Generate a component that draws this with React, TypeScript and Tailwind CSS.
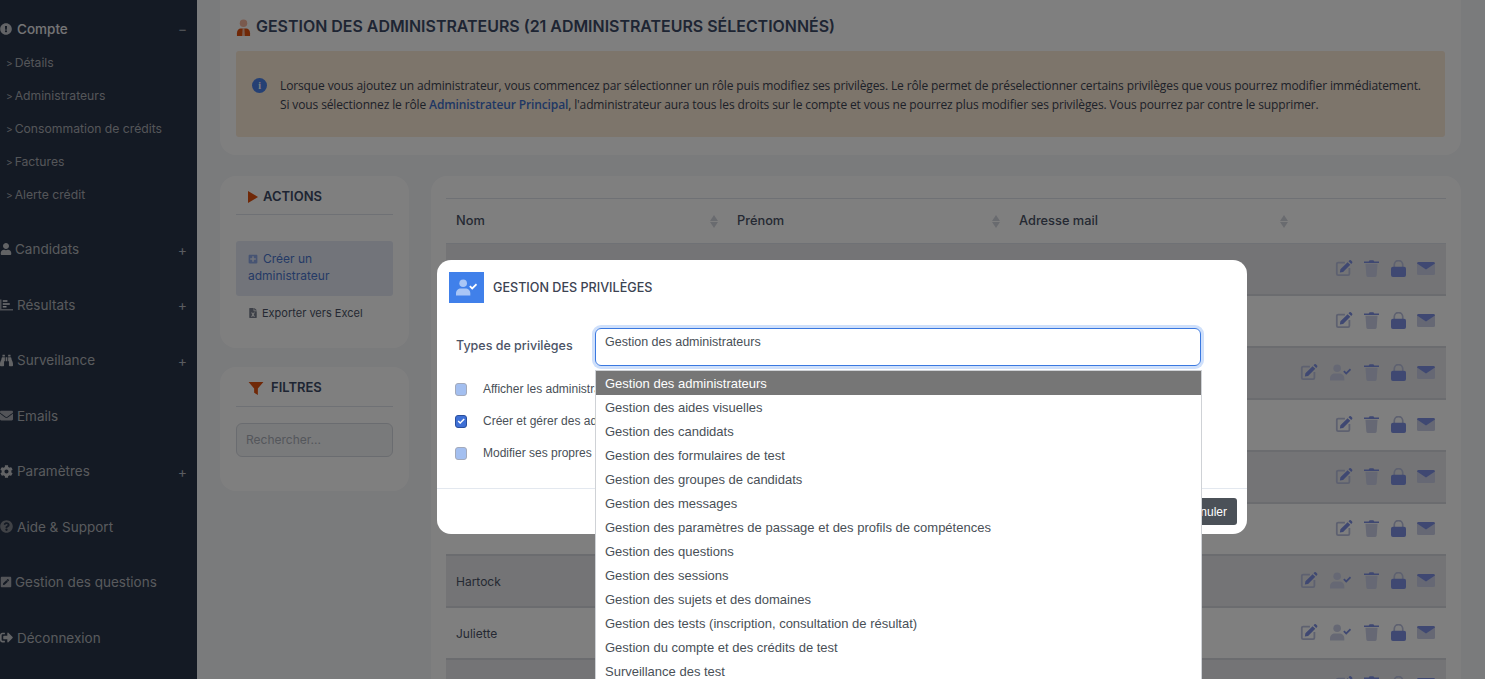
import React from "react";
import {
  FaBinoculars,
  FaCog,
  FaEnvelope,
  FaExclamationCircle,
  FaFileExcel,
  FaPenSquare,
  FaPlusSquare,
  FaQuestionCircle,
  FaSignOutAlt,
  FaUser,
} from "react-icons/fa";

const poppins = "font-['Inter','Liberation_Sans',sans-serif]";
const arial = "font-['Liberation_Sans',Arial,sans-serif]";

function ChartIcon() {
  return (
    <svg viewBox="0 0 14 12" className="w-[13px] h-[12px]">
      <path d="M0 0h1.6v10.4H14V12H0z" fill="#c9ccd2" opacity="0.7" />
      <path d="M3 1h5v1.6H3zM3 4h7.5v1.6H3zM3 7h4v1.6H3z" fill="#e6e8ec" />
    </svg>
  );
}

function EditIcon() {
  return (
    <svg viewBox="0 0 20 20" className="w-[18px] h-[18px]">
      <path d="M11 4H3.5A1.5 1.5 0 0 0 2 5.500V16.500A1.500 1.500 0 0 0 3.500 18H14.500A1.500 1.500 0 0 0 16 16.500V10" fill="none" stroke="#bcc2e0" strokeWidth="2" />
      <path d="M6 11.500 14 3.500l3 3-8 8-3.600.6zM15 2.500l1-1a1.200 1.200 0 0 1 1.700 0l1.300 1.300a1.200 1.200 0 0 1 0 1.700l-1 1z" fill="#7e90e4" />
    </svg>
  );
}

function TrashIcon() {
  return (
    <svg viewBox="0 0 16 18" className="w-[15px] h-[17px]">
      <path d="M1.500 4h13l-1 12.500a1.500 1.500 0 0 1-1.500 1.500H4a1.500 1.500 0 0 1-1.500-1.500z" fill="#ccd1e8" />
      <path d="M0 1.500h5L6 .2h4l1 1.300h5V3.200H0z" fill="#7e90e4" />
    </svg>
  );
}

function LockIcon() {
  return (
    <svg viewBox="0 0 16 18" className="w-[15px] h-[17px]">
      <path d="M3.500 8V5a4.500 4.500 0 0 1 9 0v3" fill="none" stroke="#bcc2e0" strokeWidth="1.800" />
      <rect x="0" y="7" width="16" height="11" rx="2" fill="#7e90e4" />
    </svg>
  );
}

function MailIcon() {
  return (
    <svg viewBox="0 0 18 13" className="w-[18px] h-[13px]">
      <rect x="0" y="0" width="18" height="13" rx="1.500" fill="#ccd1e8" />
      <path d="M0 1.500A1.500 1.500 0 0 1 1.500 0h15A1.500 1.500 0 0 1 18 1.500L9 7.500z" fill="#7e90e4" />
    </svg>
  );
}

function PersonCheckIcon({ person, check }: { person: string; check: string }) {
  return (
    <svg viewBox="0 0 22 17" className="w-[21px] h-[17px]">
      <circle cx="7.500" cy="4" r="4" fill={person} />
      <path d="M0 17v-2.500C0 11.500 2.500 9.500 5 9.500h5c2.500 0 5 2 5 5V17z" fill={person} />
      <path d="m14.500 7 2.500 2.500L21.500 5" fill="none" stroke={check} strokeWidth="1.800" />
    </svg>
  );
}

function RowIcons({ person }: { person?: boolean }) {
  return (
    <div className="flex items-center justify-end gap-[7.5px] pr-[10px] mb-[2px]">
      <span className="w-[20px] flex justify-center"><EditIcon /></span>
      {person && (
        <span className="w-[27px] flex justify-center">
          <PersonCheckIcon person="#ccd1e8" check="#7e90e4" />
        </span>
      )}
      <span className="w-[20px] flex justify-center"><TrashIcon /></span>
      <span className="w-[20px] flex justify-center"><LockIcon /></span>
      <span className="w-[20px] flex justify-center"><MailIcon /></span>
    </div>
  );
}

function SortArrows() {
  return (
    <span className="flex flex-col gap-[1px]">
      <span className="w-0 h-0 border-x-[4px] border-x-transparent border-b-[6px] border-b-[#d3d7df]" />
      <span className="w-0 h-0 border-x-[4px] border-x-transparent border-t-[6px] border-t-[#d3d7df]" />
    </span>
  );
}

const mainItems = [
  { label: "Candidats", icon: <FaUser className="text-[12px] text-[#c4c6cb]" />, plus: true, gap: "ml-[3px]" },
  { label: "Résultats", icon: <ChartIcon />, plus: true, gap: "ml-[4px]" },
  { label: "Surveillance", icon: <FaBinoculars className="text-[13px] text-[#c4c6cb]" />, plus: true, gap: "ml-[4px]" },
  { label: "Emails", icon: <FaEnvelope className="text-[13px] text-[#a6a9b0]" />, gap: "ml-[4px]" },
  { label: "Paramètres", icon: <FaCog className="text-[13px] text-[#c4c6cb]" />, plus: true, gap: "ml-[4px]" },
  { label: "Aide & Support", icon: <FaQuestionCircle className="text-[13px] text-[#80848d]" />, gap: "ml-[4px]" },
  { label: "Gestion des questions", icon: <FaPenSquare className="text-[12px] text-[#a6a9b0]" />, gap: "ml-[3px]" },
  { label: "Déconnexion", icon: <FaSignOutAlt className="text-[13px] text-[#c4c6cb]" />, gap: "ml-[4px]" },
];

const subItems = ["Détails", "Administrateurs", "Consommation de crédits", "Factures", "Alerte crédit"];

const options = [
  "Gestion des administrateurs",
  "Gestion des aides visuelles",
  "Gestion des candidats",
  "Gestion des formulaires de test",
  "Gestion des groupes de candidats",
  "Gestion des messages",
  "Gestion des paramètres de passage et des profils de compétences",
  "Gestion des questions",
  "Gestion des sessions",
  "Gestion des sujets et des domaines",
  "Gestion des tests (inscription, consultation de résultat)",
  "Gestion du compte et des crédits de test",
  "Surveillance des test",
];

const rows = [
  { nom: "" },
  { nom: "" },
  { nom: "", person: true },
  { nom: "" },
  { nom: "" },
  { nom: "" },
  { nom: "Hartock", person: true },
  { nom: "Juliette", person: true },
  { nom: "" },
];

const privileges = [
  { label: "Afficher les administrateurs" },
  { label: "Créer et gérer des administrateurs", checked: true },
  { label: "Modifier ses propres privilèges" },
];

function Sidebar() {
  return (
    <aside className={`w-[197px] shrink-0 bg-[#283448] text-[#dfe1e5] ${poppins}`}>
      <div className="h-[33px] mt-[12.5px] flex items-center pr-[10px] text-[13.500px] font-medium text-[#e8e9ec]">
        <FaExclamationCircle className="text-[12px] text-[#c4c7cd]" />
        <span className="ml-[5px] flex-1">Compte</span>
        <span className="text-[#9ba0a9]">−</span>
      </div>
      <ul className="pt-[1px] mb-[10px]">
        {subItems.map((s) => (
          <li key={s} className="h-[33px] flex items-center pl-[6px] text-[12.200px] text-[#a9acb3]">
            <span className="mr-[2px] text-[10px]">&gt;</span>{s}
          </li>
        ))}
      </ul>
      {mainItems.map((m) => (
        <div key={m.label} className="h-[55.500px] flex items-center pr-[10px] text-[13.500px] text-[#b2b5bb]">
          {m.icon}
          <span className={`${m.gap} flex-1`}>{m.label}</span>
          {m.plus && <span className="text-[14px] text-[#b4b8c0]">+</span>}
        </div>
      ))}
    </aside>
  );
}

function Content() {
  return (
    <main className="flex-1 min-w-0 bg-[#f5f6f9] pl-[23px] pr-[24px]">
      <section className="h-[155px] bg-white rounded-b-2xl px-[16px] pt-[16px]">
        <h1 className={`flex items-center gap-[5px] h-[22px] text-[15.950px] font-semibold text-[#3c4a66] ${poppins}`}>
          <svg viewBox="0 0 16 18" className="w-[15px] h-[17px]">
            <circle cx="8" cy="4.500" r="4" fill="#f5b49c" />
            <path d="M1 18v-3c0-3 2-5 4-5h6c2 0 4 2 4 5v3z" fill="#e0500f" />
            <path d="M7 10h2L9.500 18h-3z" fill="#fff" opacity="0.6" />
          </svg>
          GESTION DES ADMINISTRATEURS (21 ADMINISTRATEURS SÉLECTIONNÉS)
        </h1>
        <div className="mt-[13px] h-[86px] rounded-[3px] bg-[#faead6] flex items-center pl-[16px] pt-[2px] text-[12px] tracking-[-0.125px] leading-[19.500px] text-[#3b4252] font-['Open_Sans',sans-serif]">
          <span className="w-[15px] h-[15px] rounded-full bg-[#4a80e8] text-white text-[10px] font-bold flex items-center justify-center mr-[13px] -mt-[19px] font-['Liberation_Serif',serif]">i</span>
          <div>
            <p>Lorsque vous ajoutez un administrateur, vous commencez par sélectionner un rôle puis modifiez ses privilèges. Le rôle permet de préselectionner certains privilèges que vous pourrez modifier immédiatement.</p>
            <p>
              Si vous sélectionnez le rôle <span className="font-semibold text-[#3f6fc9]">Administrateur Principal</span>, l'administrateur aura tous les droits sur le compte et vous ne pourrez plus modifier ses privilèges. Vous pourrez par contre le supprimer.
            </p>
          </div>
        </div>
      </section>

      <div className="mt-[21px] flex gap-[22px] items-start">
        <div className="w-[189px] shrink-0">
          <section className={`h-[172px] bg-white rounded-2xl px-[16px] ${poppins}`}>
            <h2 className="h-[39px] pt-[3px] flex items-center pl-[12px] gap-[5px] border-b border-[#dfe3ea] text-[13px] font-semibold text-[#3c4a66]">
              <span className="w-0 h-0 border-y-[6px] border-y-transparent border-l-[10px] border-l-[#e0500f]" />
              ACTIONS
            </h2>
            <div className="mt-[26px] h-[55px] rounded-[3px] bg-[#e4e9f5] pl-[12px] pr-[30px] pt-[9px] text-[12px] leading-[17px] text-[#4a74cc]">
              <FaPlusSquare className="inline text-[10px] mr-[5px] mb-[2px] text-[#8ea8e6]" />
              Créer un administrateur
            </div>
            <div className="mt-[9px] pl-[12px] flex items-center gap-[4px] text-[11px] text-[#4b5366]">
              <FaFileExcel className="text-[10px] text-[#7b8190]" />
              Exporter vers Excel
            </div>
          </section>
          <section className={`mt-[19px] h-[124px] bg-white rounded-2xl px-[16px] ${poppins}`}>
            <h2 className="h-[40px] pt-[3px] flex items-center pl-[12px] gap-[7px] border-b border-[#dfe3ea] text-[13px] font-semibold text-[#3c4a66]">
              <svg viewBox="0 0 16 14" className="w-[16px] h-[13px]">
                <path d="M0 0h16l-6 7v7l-4-2.500V7z" fill="#e0500f" />
              </svg>
              FILTRES
            </h2>
            <div className="mt-[16px] h-[34px] rounded-[6px] border border-[#d5d9e0] bg-[#f3f4f6] flex items-center px-[9px] text-[12px] text-[#a9aeb8]">
              Rechercher...
            </div>
          </section>
        </div>

        <section className={`flex-1 min-w-0 h-[600px] bg-white rounded-t-2xl px-[15px] pt-[22px] ${poppins}`}>
          <div className="h-[46px] grid grid-cols-[281px_282px_288px_1fr] items-center border-y border-[#dfe3ea] text-[12.800px] font-medium text-[#4b5366]">
            {["Nom", "Prénom", "Adresse mail"].map((h) => (
              <div key={h} className="flex items-center justify-between pl-[10px] pr-[9px]">
                {h}
                <SortArrows />
              </div>
            ))}
          </div>
          {rows.map((r, i) => (
            <div
              key={i}
              className={`h-[52px] grid grid-cols-[282px_1fr] items-center border-b-2 border-[#d6d9de] text-[12px] text-[#4b5366] ${i % 2 === 0 ? "bg-[#e8e9ec]" : "bg-white"}`}
            >
              <div className="pl-[10px] pt-[1px]">{r.nom}</div>
              <RowIcons person={r.person} />
            </div>
          ))}
        </section>
      </div>
    </main>
  );
}

function Modal() {
  return (
    <div className="absolute left-[437px] top-[260px] w-[810px] h-[274px] rounded-[14px] bg-white">
      <div className={`h-[55px] pl-[12px] pt-[12px] flex items-start gap-[9px] ${poppins}`}>
        <div className="w-[35px] h-[31px] bg-[#4080ea] flex items-center justify-center">
          <PersonCheckIcon person="#a9c6f6" check="#ffffff" />
        </div>
        <h3 className="h-[32px] flex items-center text-[12.600px] font-medium text-[#3c4352]">GESTION DES PRIVILÈGES</h3>
      </div>
      <div className="mt-[13px] flex items-start h-[38px]">
        <label className={`w-[158px] pl-[19px] h-[36px] flex items-center text-[12.500px] font-medium text-[#4b5366] ${poppins}`}>Types de privilèges</label>
        <div className={`w-[606px] h-[38px] rounded-[6px] border border-[#3a78e0] ring-[3px] ring-[#cfe0fb] pl-[9px] pt-[4px] text-[12.500px] text-[#495057] ${arial}`}>
          Gestion des administrateurs
        </div>
      </div>
      <ul className={`mt-[7px] pl-[18px] text-[12px] text-[#495057] ${arial}`}>
        {privileges.map((p) => (
          <li key={p.label} className="h-[32px] flex items-center gap-[16px]">
            <span className={`w-[12px] h-[13px] rounded-[3px] flex items-center justify-center ${p.checked ? "bg-[#3e70d6] border border-[#2b4f9c]" : "bg-[#a3bff0] border border-[#a3aabb]"}`}>
              {p.checked && (
                <svg viewBox="0 0 10 10" className="w-[8px] h-[8px]">
                  <path d="m1.500 5 2.500 2.500 5-5" fill="none" stroke="#fff" strokeWidth="1.800" />
                </svg>
              )}
            </span>
            {p.label}
          </li>
        ))}
      </ul>
      <div className="mt-[19px] border-t border-[#e3e8ef] h-[46px] flex items-start justify-end pt-[9px] pr-[10px]">
        <button className={`h-[27px] px-[10px] rounded-[3px] bg-[#4b5158] text-white text-[12px] ${arial}`}>Annuler</button>
      </div>
    </div>
  );
}

function Dropdown() {
  return (
    <ul className={`absolute left-[595px] top-[370px] w-[607px] border border-[#cfd2d6] bg-white text-[13px] text-[#495057] ${arial}`}>
      {options.map((o, i) => (
        <li key={o} className={`h-[24px] leading-[25px] pl-[9px] ${i === 0 ? "bg-[#767676] text-white" : ""}`}>{o}</li>
      ))}
    </ul>
  );
}

export default function App() {
  return (
    <div className="relative h-[679px] overflow-hidden flex">
      <Sidebar />
      <Content />
      <div className="absolute inset-0 bg-black/50" />
      <Modal />
      <Dropdown />
    </div>
  );
}
